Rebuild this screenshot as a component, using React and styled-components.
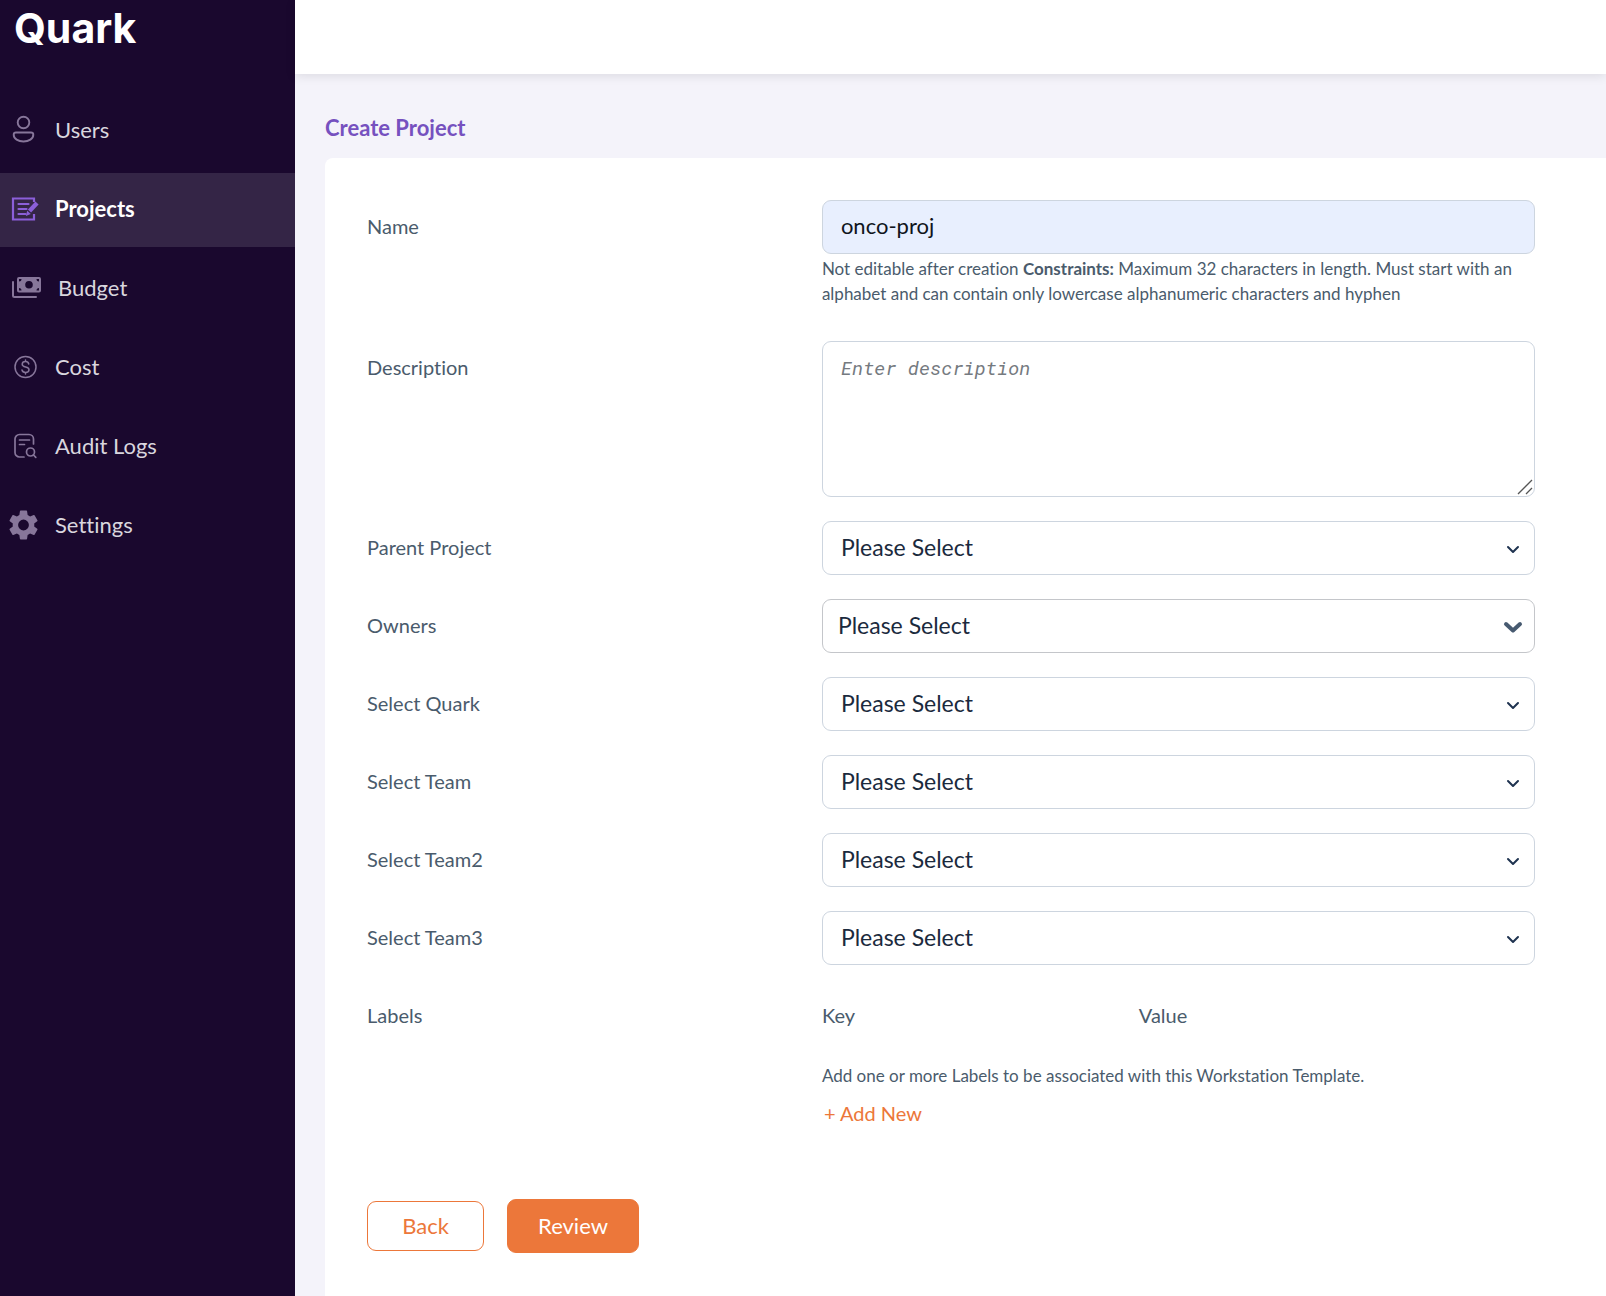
import styled, { createGlobalStyle } from "styled-components";

const GlobalStyle = createGlobalStyle`
  *, *::before, *::after {
    box-sizing: border-box;
  }

  body {
    margin: 0;
    background: #f4f3fa;
    color: #4a5b6c;
    font-family: Lato, "Open Sans", sans-serif;
    font-size: 20px;
    font-variant-ligatures: none;
  }

  button, input, select {
    font-family: inherit;
  }
`;

function UserIcon() {
  return (
    <svg width="30" height="30" viewBox="0 0 30 30" fill="none" stroke="currentColor" strokeWidth="1.9">
      <circle cx="13.5" cy="7.5" r="5.8" />
      <path d="M6 17.500h15c1.400 0 2.300.9 2.300 2.300 0 4-4.500 6.700-9.800 6.700s-9.800-2.700-9.800-6.700c0-1.400.9-2.300 2.300-2.300z" />
    </svg>
  );
}

function ProjectIcon() {
  return (
    <svg width="30" height="30" viewBox="0 0 30 30" fill="none" stroke="currentColor" strokeWidth="2.2">
      <path d="M24 8V4.500H3v21h21V20" />
      <path d="M8.500 10h10M8.500 15h8M8.500 20h7" strokeLinecap="round" />
      <path d="M19.500 17l7.500-8" strokeWidth="4.400" />
      <path d="M17.200 16.800l3.600 3.300-5 2z" fill="currentColor" stroke="none" />
    </svg>
  );
}

function BudgetIcon() {
  return (
    <svg width="32" height="30" viewBox="-3 0 32 30" fill="currentColor">
      <path
        fillRule="evenodd"
        d="M7 4h20a2 2 0 0 1 2 2v11.500a2 2 0 0 1-2 2H7a2 2 0 0 1-2-2V6a2 2 0 0 1 2-2zM17 8a3.800 3.800 0 1 0 0 7.600A3.800 3.800 0 0 0 17 8zM7 6v2.500A2.500 2.500 0 0 0 9.500 6zM27 6h-2.500A2.500 2.500 0 0 0 27 8.500zM7 17.500h2.500A2.500 2.500 0 0 0 7 15zM27 17.500V15a2.500 2.500 0 0 0-2.500 2.500z"
      />
      <path d="M1 9v13.500a1.500 1.500 0 0 0 1.500 1.500H24" fill="none" stroke="currentColor" strokeWidth="2" strokeLinecap="round" />
    </svg>
  );
}

function CostIcon() {
  return (
    <svg width="30" height="30" viewBox="0 0 30 30" fill="none" stroke="currentColor" strokeWidth="1.500" strokeLinecap="round">
      <circle cx="15.500" cy="15" r="10.500" />
      <path d="M15.500 8v1.600M15.500 20.400V22M18.800 12c-.3-1.400-1.600-2.400-3.300-2.400-1.900 0-3.300 1-3.300 2.600 0 3.800 6.800 1.700 6.800 5.500 0 1.600-1.500 2.700-3.500 2.700-1.800 0-3.200-.9-3.500-2.400" />
    </svg>
  );
}

function AuditIcon() {
  return (
    <svg width="30" height="30" viewBox="0 0 30 30" fill="none" stroke="currentColor" strokeWidth="1.700" strokeLinecap="round">
      <path d="M14 26H9.500A4.500 4.500 0 0 1 5 21.500V8a4.500 4.500 0 0 1 4.500-4.500h9.500A4.500 4.500 0 0 1 23.500 8v5" />
      <path d="M9.500 9h10M9.500 13.500h5M23.500 24l2.300 2.300" />
      <circle cx="20.500" cy="21" r="4" />
    </svg>
  );
}

function GearIcon() {
  return (
    <svg width="36" height="36" viewBox="1 0 24 24" fill="currentColor">
      <path d="M19.140 12.940c.04-.3.060-.61.060-.94 0-.32-.02-.64-.07-.94l2.030-1.580a.49.49 0 0 0 .12-.61l-1.920-3.320a.488.488 0 0 0-.59-.22l-2.390.96c-.5-.38-1.030-.7-1.620-.94l-.36-2.540a.484.484 0 0 0-.48-.41h-3.840c-.24 0-.43.170-.47.410l-.36 2.540c-.59.240-1.130.570-1.620.940l-2.390-.96c-.22-.08-.47 0-.59.220L2.740 8.870c-.12.210-.08.470.12.610l2.030 1.580c-.05.300-.09.630-.09.940s.02.640.07.940l-2.030 1.580a.49.49 0 0 0-.12.610l1.920 3.320c.12.220.37.290.59.220l2.390-.96c.5.380 1.030.700 1.620.940l.36 2.540c.05.240.24.410.48.410h3.840c.24 0 .44-.17.470-.41l.36-2.540c.59-.24 1.130-.56 1.620-.94l2.390.96c.22.080.47 0 .59-.22l1.920-3.320c.12-.22.070-.47-.12-.61l-2.010-1.580zM12 15.600A3.600 3.600 0 1 1 12 8.400a3.600 3.600 0 0 1 0 7.200z" />
    </svg>
  );
}

const navItems = [
  { label: "Users", icon: <UserIcon /> },
  { label: "Projects", icon: <ProjectIcon />, active: true },
  { label: "Budget", icon: <BudgetIcon />, wide: true },
  { label: "Cost", icon: <CostIcon /> },
  { label: "Audit Logs", icon: <AuditIcon /> },
  { label: "Settings", icon: <GearIcon /> },
];

const selectFields = [
  { id: "parent", label: "Parent Project" },
  { id: "owners", label: "Owners", bold: true },
  { id: "quark", label: "Select Quark" },
  { id: "team", label: "Select Team" },
  { id: "team2", label: "Select Team2" },
  { id: "team3", label: "Select Team3" },
];

function SelectRow({ id, label, bold }) {
  return (
    <Row>
      <Label htmlFor={id}>{label}</Label>
      <Control>
        <Select id={id} name={id} $bold={bold} defaultValue="">
          <option value="">Please Select</option>
        </Select>
        <Chevron
          $bold={bold}
          viewBox="0 0 20 20"
          fill="none"
          stroke="currentColor"
          strokeLinecap="round"
          strokeLinejoin="round"
        >
          {bold ? <path d="M3 7l7 6.500L17 7" /> : <path d="M5 8l5 5 5-5" />}
        </Chevron>
      </Control>
    </Row>
  );
}

export default function App() {
  return (
    <>
      <GlobalStyle />
      <Shell>
        <Sidebar>
          <Logo href="#">Quark</Logo>
          <Nav>
            {navItems.map(({ label, icon, active, wide }) => (
              <NavLink href="#" key={label} $active={active} $wide={wide}>
                <NavIcon $active={active}>{icon}</NavIcon>
                {label}
              </NavLink>
            ))}
          </Nav>
        </Sidebar>

        <Main>
          <TopBar />
          <Content>
            <Title>Create Project</Title>
            <Card>
              <Row>
                <Label htmlFor="name">Name</Label>
                <div>
                  <Input id="name" name="name" defaultValue="onco-proj" />
                  <Hint>
                    Not editable after creation <b>Constraints:</b> Maximum 32
                    characters in length. Must start with an alphabet and can
                    contain only lowercase alphanumeric characters and hyphen
                  </Hint>
                </div>
              </Row>

              <Row $spaced>
                <Label htmlFor="description">Description</Label>
                <Control>
                  <TextArea id="description" name="description" placeholder="Enter description" />
                  <Grip viewBox="0 0 16 16" stroke="currentColor" strokeWidth="1.300">
                    <path d="M1 15L15 1M9 15l6-6" />
                  </Grip>
                </Control>
              </Row>

              {selectFields.map((field) => (
                <SelectRow key={field.id} {...field} />
              ))}

              <Row>
                <Label as="span">Labels</Label>
                <div>
                  <LabelHead>
                    <span>Key</span>
                    <span>Value</span>
                  </LabelHead>
                  <Hint>Add one or more Labels to be associated with this Workstation Template.</Hint>
                  <AddButton type="button">+ Add New</AddButton>
                </div>
              </Row>

              <Actions>
                <BackButton type="button">Back</BackButton>
                <ReviewButton type="submit">Review</ReviewButton>
              </Actions>
            </Card>
          </Content>
        </Main>
      </Shell>
    </>
  );
}

const Shell = styled.div`
  display: flex;
  min-height: 100vh;
`;

const Sidebar = styled.aside`
  flex: 0 0 295px;
  background: #1a082e;
`;

const Logo = styled.a`
  display: block;
  height: 94px;
  padding: 3px 14px;
  color: #fff;
  font-family: Inter, sans-serif;
  font-size: 41px;
  font-weight: 700;
  line-height: 50px;
  text-decoration: none;
`;

const Nav = styled.nav`
  display: flex;
  flex-direction: column;
  gap: 5px;
`;

const NavLink = styled.a`
  display: flex;
  align-items: center;
  gap: ${({ $wide }) => ($wide ? "17px" : "14px")};
  height: 74px;
  padding: 0 0 3px 9px;
  background: ${({ $active }) => ($active ? "#342546" : "transparent")};
  color: ${({ $active }) => ($active ? "#fff" : "#d9d6de")};
  font-size: 22px;
  font-weight: ${({ $active }) => ($active ? 700 : 400)};
  text-decoration: none;
`;

const NavIcon = styled.span`
  display: flex;
  justify-content: center;
  width: 32px;
  color: ${({ $active }) => ($active ? "#8b5fd9" : "#87769a")};

  svg {
    flex: none;
  }
`;

const Main = styled.main`
  display: flex;
  flex: 1;
  flex-direction: column;
  min-width: 0;
`;

const TopBar = styled.header`
  height: 74px;
  background: #fff;
  box-shadow: 0 2px 10px rgba(0, 0, 0, 0.1);
`;

const Content = styled.div`
  display: flex;
  flex: 1;
  flex-direction: column;
  padding: 40px 0 0 30px;
`;

const Title = styled.h1`
  margin: 0 0 16px;
  color: #7651bf;
  font-size: 22px;
  font-weight: 700;
  line-height: 28px;
`;

const Card = styled.form`
  display: flex;
  flex: 1;
  flex-direction: column;
  gap: 24px;
  padding: 42px 71px 42px 42px;
  border-radius: 8px 0 0 0;
  background: #fff;
`;

const Row = styled.div`
  display: grid;
  grid-template-columns: 37fr 58fr;
  align-items: start;
  margin-top: ${({ $spaced }) => ($spaced ? "11px" : 0)};
`;

const Label = styled.label`
  font-size: 20px;
  line-height: 52px;
`;

const Control = styled.div`
  position: relative;
  display: flex;
`;

const Input = styled.input`
  display: block;
  width: 100%;
  height: 54px;
  padding: 0 18px 3px;
  border: 1px solid #cdd5df;
  border-radius: 9px;
  background: #e8effe;
  color: #10151c;
  font-size: 22px;
`;

const TextArea = styled.textarea`
  width: 100%;
  height: 156px;
  padding: 14px 18px;
  border: 1px solid #cdd5df;
  border-radius: 9px;
  background: #fff;
  font-family: "Roboto Mono", "Liberation Mono", monospace;
  font-size: 19px;
  line-height: 24px;
  resize: none;

  &::placeholder {
    color: #757a80;
    font-style: italic;
  }
`;

const Grip = styled.svg`
  position: absolute;
  right: 2px;
  bottom: 2px;
  width: 16px;
  height: 16px;
  color: #555;
`;

const Select = styled.select`
  width: 100%;
  height: 54px;
  padding: 0 ${({ $bold }) => ($bold ? "15px" : "18px")} 3px;
  border: 1px solid ${({ $bold }) => ($bold ? "#c4c6ca" : "#cdd5df")};
  border-radius: 9px;
  background: #fff;
  color: #1b2a3d;
  font-size: 23px;
  appearance: none;
`;

const Chevron = styled.svg`
  position: absolute;
  top: 18px;
  right: 12px;
  width: 20px;
  height: 20px;
  color: ${({ $bold }) => ($bold ? "#475a70" : "#1f3350")};
  stroke-width: ${({ $bold }) => ($bold ? 4 : 2)};
  pointer-events: none;
`;

const Hint = styled.p`
  margin: 2px 0 0;
  font-size: 17px;
  line-height: 25px;
`;

const LabelHead = styled.div`
  display: grid;
  grid-template-columns: 4fr 5fr;
  margin-bottom: 22px;
  line-height: 52px;
`;

const Button = styled.button`
  padding: 0 0 2px;
  border: 1px solid #ec773a;
  border-radius: 9px;
  font-size: 22px;
  font-weight: 400;
  cursor: pointer;
`;

const AddButton = styled.button`
  margin-top: 11px;
  padding: 0 2px;
  border: 0;
  background: none;
  color: #ec773a;
  font-size: 20px;
  line-height: 28px;
  cursor: pointer;
`;

const Actions = styled.div`
  display: flex;
  align-items: center;
  gap: 23px;
  margin-top: 48px;
`;

const BackButton = styled(Button)`
  width: 117px;
  height: 50px;
  background: #fff;
  color: #ec773a;
`;

const ReviewButton = styled(Button)`
  width: 132px;
  height: 54px;
  background: #ec773a;
  color: #fff;
`;
